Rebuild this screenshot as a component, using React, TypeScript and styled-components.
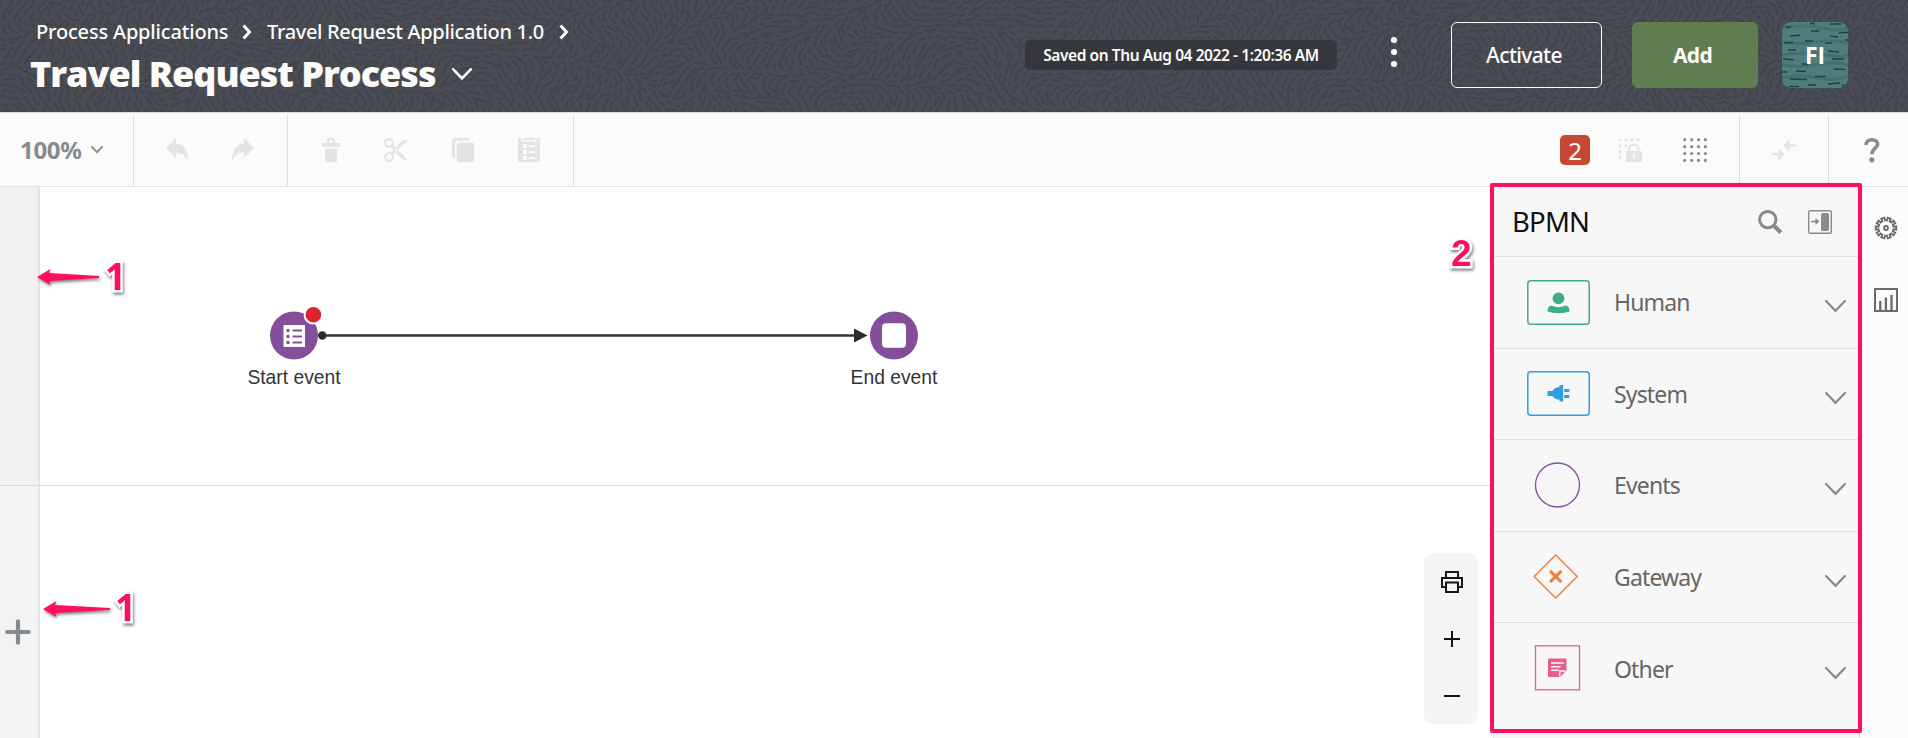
import React from 'react';
import styled, { createGlobalStyle } from 'styled-components';

const GlobalStyle = createGlobalStyle`
  * { box-sizing: border-box; }
  body { margin: 0; overflow: hidden; font-family: 'Noto Sans', 'Open Sans', sans-serif; }
  svg { display: block; flex: none; }
`;

const Page = styled.div`
  width: 1908px;
  height: 738px;
  display: flex;
  flex-direction: column;
  background: #fff;
  overflow: hidden;
`;

const Header = styled.header`
  position: relative;
  height: 112px;
  flex: none;
  display: flex;
  justify-content: space-between;
  background: #494c55;
  color: #fcfbfa;
`;

const Texture = styled.svg`
  position: absolute;
  inset: 0;
`;

const Titles = styled.div`
  position: relative;
  padding: 16px 0 0 30px;
`;

const Crumbs = styled.nav`
  display: flex;
  align-items: center;
  height: 32px;
  padding-left: 6px;
`;

const Crumb = styled.span<{ $w: number; $indent?: number; $ls: number }>`
  width: ${(p) => p.$w}px;
  padding-left: ${(p) => p.$indent ?? 0}px;
  font-size: 20px;
  line-height: 28px;
  font-weight: 500;
  letter-spacing: ${(p) => p.$ls}px;
  white-space: nowrap;
`;

const TitleRow = styled.div`
  display: flex;
  align-items: center;
  height: 52px;
`;

const Title = styled.h1`
  width: 422px;
  margin: 0;
  font-family: 'Open Sans', 'Noto Sans', sans-serif;
  font-size: 36px;
  line-height: 52px;
  font-weight: 800;
  letter-spacing: -1.02px;
  white-space: nowrap;
`;

const Actions = styled.div`
  position: relative;
  display: flex;
  align-items: center;
  height: 110px;
  padding-right: 60px;
`;

const SavedPill = styled.div`
  width: 312px;
  height: 30px;
  margin-right: 54px;
  border-radius: 5px;
  background: #36373c;
  font-size: 15.5px;
  font-weight: 600;
  line-height: 30px;
  letter-spacing: -0.42px;
  text-align: center;
  white-space: nowrap;
`;

const Button = styled.button<{ $primary?: boolean; $w: number }>`
  width: ${(p) => p.$w}px;
  height: 66px;
  padding: 0 5px 0 0;
  border: 1px solid ${(p) => (p.$primary ? '#5f7d4f' : '#fcfbfa')};
  border-radius: 6px;
  background: ${(p) => (p.$primary ? '#5f7d4f' : 'transparent')};
  color: #fcfbfa;
  font: ${(p) => (p.$primary ? 700 : 500)} 21px 'Noto Sans', sans-serif;
  letter-spacing: -0.65px;
  & + & { margin-left: 30px; }
`;

const Avatar = styled.div`
  position: relative;
  width: 66px;
  height: 66px;
  margin-left: 24px;
  border-radius: 9px;
  overflow: hidden;
  background: #4f7d7b;
`;

const Initials = styled.span`
  position: absolute;
  inset: 0;
  display: grid;
  place-items: center;
  font-family: 'Open Sans', sans-serif;
  font-size: 23px;
  font-weight: 700;
`;

const Toolbar = styled.div`
  flex: none;
  height: 75px;
  padding-top: 1px;
  display: flex;
  background: #fcfbfa;
  border-top: 1px solid #dfe1e0;
  border-bottom: 1px solid #e2e2e2;
`;

const Group = styled.div<{ $w: number; $pad?: number; $gap?: number; $line?: 'left' | 'right' }>`
  flex: none;
  width: ${(p) => p.$w}px;
  height: 72px;
  display: flex;
  align-items: center;
  padding-left: ${(p) => p.$pad ?? 0}px;
  gap: ${(p) => p.$gap ?? 0}px;
  ${(p) => p.$line && `border-${p.$line}: 1px solid #dfe1e0;`}
`;

const Spacer = styled.div`
  flex: 1;
`;

const Zoom = styled.span`
  width: 71px;
  margin: -2px 0 0 -1px;
  font-size: 24px;
  font-weight: 700;
  color: #868b8f;
  letter-spacing: -0.3px;
`;

const IssueBadge = styled.span`
  flex: none;
  width: 30px;
  height: 30px;
  border-radius: 5px;
  background: #c74634;
  color: #fff;
  font-size: 24px;
  line-height: 31px;
  text-align: center;
`;

const Workspace = styled.div`
  position: relative;
  flex: 1;
  display: flex;
  min-height: 0;
`;

const Lanes = styled.div`
  width: 1493px;
  display: flex;
  flex-direction: column;
`;

const Lane = styled.div<{ $h?: number }>`
  display: flex;
  ${(p) => (p.$h ? `height: ${p.$h}px; border-bottom: 1px solid #dcdcdc;` : 'flex: 1;')}
`;

const LaneHead = styled.div<{ $bg: string }>`
  width: 40px;
  border-right: 2px solid #e4e4e4;
  background: ${(p) => p.$bg};
  padding: 133px 0 0 5px;
`;

const NodeShape = styled.div<{ $x: number; $y: number }>`
  position: absolute;
  left: ${(p) => p.$x}px;
  top: ${(p) => p.$y}px;
  width: 120px;
  display: flex;
  flex-direction: column;
  align-items: center;
`;

const NodeLabel = styled.span`
  margin-top: 5px;
  font: 19.3px/26px 'Liberation Sans', Arial, sans-serif;
  color: #333;
  white-space: nowrap;
  letter-spacing: 0;
`;

const Overlay = styled.svg<{ $x: number; $y: number }>`
  position: absolute;
  left: ${(p) => p.$x}px;
  top: ${(p) => p.$y}px;
  overflow: visible;
`;

const ArrowOverlay = styled(Overlay)`
  filter: drop-shadow(1px 2.5px 1.5px rgba(0, 0, 0, 0.5));
`;

const ZoomTools = styled.div`
  position: absolute;
  left: 1424px;
  top: 366px;
  width: 54px;
  height: 171px;
  border-radius: 9px;
  background: #f6f5f4;
  display: flex;
  flex-direction: column;
  align-items: center;
  padding: 18px 0 0 2px;
  gap: 32px;
`;

const Palette = styled.aside`
  width: 367px;
  border-left: 1px solid #dfe1e0;
  border-right: 1px solid #dfe1e0;
  background: #f7f7f7;
`;

const PaletteHead = styled.div`
  height: 70px;
  display: flex;
  align-items: center;
  padding: 0 27px 0 18px;
  border-bottom: 1px solid #dfdfdf;
`;

const PaletteTitle = styled.h2`
  flex: 1;
  margin: 0;
  font-size: 27.5px;
  font-weight: 400;
  color: #111;
  letter-spacing: -0.8px;
`;

const IconGap = styled.span<{ $w: number }>`
  flex: none;
  width: ${(p) => p.$w}px;
`;

const PaletteRow = styled.div<{ $last?: boolean }>`
  height: 91.5px;
  display: flex;
  align-items: center;
  padding: 0 13px 0 33px;
  ${(p) => !p.$last && 'border-bottom: 1px solid #dfdfdf;'}
  & > svg:last-child { margin-top: 9px; }
`;

const RowLabel = styled.span`
  flex: 1;
  padding-left: 24px;
  font-size: 23px;
  color: #666;
  letter-spacing: -0.85px;
`;

const Rail = styled.div`
  flex: 1;
  background: #fcfbfa;
  display: flex;
  flex-direction: column;
  padding: 29px 0 0 14px;
  gap: 48px;
`;

const Highlight = styled.div`
  position: absolute;
  left: 1490px;
  top: -4px;
  width: 372px;
  height: 550px;
  border: 4px solid #ff0f5b;
  border-radius: 2px;
`;

const Marker = styled.span<{ $x: number; $y: number; $face?: string }>`
  position: absolute;
  left: ${(p) => p.$x}px;
  top: ${(p) => p.$y}px;
  font: bold 37px/42px ${(p) => p.$face ?? "'Open Sans'"}, sans-serif;
  color: #ff0f5b;
  -webkit-text-stroke: 5px #fff;
  paint-order: stroke fill;
  filter: drop-shadow(1.5px 2.5px 1.5px rgba(0, 0, 0, 0.5));
`;

/* Short strokes following a slowly turning flow field. */
const strokes = (() => {
  let d = '';
  let seed = 7;
  const rnd = () => {
    seed = (seed * 16807) % 2147483647;
    return seed / 2147483647;
  };
  for (let row = 0; row < 20; row++) {
    for (let col = 0; col < 240; col++) {
      const x = col * 8 + (row % 2) * 4 + rnd() * 4;
      const y = row * 6 + rnd() * 4;
      const a =
        Math.sin(x / 41 + 2 * Math.sin(y / 27)) * 1.3 +
        Math.cos(y / 19 + x / 73) * 1.2 +
        Math.sin(x / 97 - y / 31) * 0.8 +
        rnd() * 0.6;
      const l = 1.8 + rnd() * 1.6;
      const dx = Math.cos(a) * l;
      const dy = Math.sin(a) * l;
      d += `M${(x - dx).toFixed(1)} ${(y - dy).toFixed(1)}L${(x + dx).toFixed(1)} ${(y + dy).toFixed(1)}`;
    }
  }
  return d;
})();

const Chevron = ({ w, h, color, sw }: { w: number; h: number; color: string; sw: number }) => (
  <svg width={w} height={h} viewBox={`0 0 ${w} ${h}`} fill="none" stroke={color} strokeWidth={sw} strokeLinecap="round">
    <path d={`M${sw / 2} ${sw / 2}L${w / 2} ${h - sw}L${w - sw / 2} ${sw / 2}`} />
  </svg>
);

const CrumbArrow = () => (
  <svg width="10" height="16" viewBox="0 0 10 16" fill="none" stroke="#fcfbfa" strokeWidth="3">
    <path d="M1.5 1.5L7.5 8L1.5 14.5" />
  </svg>
);

const Undo = ({ flip }: { flip?: boolean }) => (
  <svg width="24" height="24" viewBox="0 0 24 24" fill="#e4e4e4">
    <path transform={flip ? 'translate(24 0) scale(-1 1)' : undefined} d="M1 10L11 0V6C19 6 23 12 23 23C20 17 17 14.5 11 14.5V20Z" />
  </svg>
);

const Trash = () => (
  <svg width="18" height="24" viewBox="0 0 18 24" fill="#e4e4e4">
    <path fillRule="evenodd" d="M5 5V2Q5 0 7 0H11Q13 0 13 2V5H17Q18 5 18 6V9H0V6Q0 5 1 5ZM7.3 2.3V5H10.7V2.3ZM3 10.5H15V23Q15 24 14 24H4Q3 24 3 23Z" />
  </svg>
);

const Scissors = () => (
  <svg width="24" height="24" viewBox="0 0 24 24" fill="none" stroke="#e4e4e4">
    <circle cx="5" cy="5" r="3.9" strokeWidth="2.2" />
    <circle cx="5" cy="19" r="3.9" strokeWidth="2.2" />
    <path d="M7.7 16.5L18.5 4.5" strokeWidth="3.2" />
    <path d="M7.7 7.5L18.5 19.8" strokeWidth="3.2" />
    <path d="M15 6L20 2H24L14.5 11.5ZM15 18L20 22H24L14.5 12.5Z" fill="#e4e4e4" stroke="none" />
    <circle cx="12.5" cy="12.3" r="1.2" fill="#fcfbfa" stroke="none" />
  </svg>
);

const Copy = () => (
  <svg width="22" height="24" viewBox="0 0 22 24" fill="#e4e4e4">
    <path d="M0 2Q0 0 2 0H17V2.7H5Q3 2.7 3 4.7V19.5H1.5Q0 19.5 0 18Z" />
    <rect x="4.8" y="4.5" width="17.2" height="19.5" rx="2" />
  </svg>
);

const FormIcon = () => (
  <svg width="22" height="24" viewBox="0 0 22 24">
    <path d="M0 0H3.5V3.5H18.5V0H22V24H0Z" fill="#e4e4e4" />
    <path d="M5 0H17V2H5Z" fill="#e4e4e4" />
    <path d="M5 6H9V10H5ZM11 7.3H17.3V9H11ZM5 12H9V16H5ZM11 13.3H17.3V15H11ZM5 18H9V22H5ZM11 19.3H17.3V21H11Z" fill="#fcfbfa" />
  </svg>
);

const dots = [1.7, 8.7, 15.5, 22.4];

const GridIcon = () => (
  <svg width="24" height="24" viewBox="0 0 24 24" fill="#868b8f">
    {dots.map((y) => dots.map((x) => <circle key={`${x}-${y}`} cx={x} cy={y} r="1.6" />))}
  </svg>
);

const GridLock = () => (
  <svg width="24" height="24" viewBox="0 0 24 24" fill="#e4e4e4">
    {[2, 8, 14, 20].map((x) => <circle key={x} cx={x} cy="1.7" r="1.5" />)}
    {[2, 8].map((x) => <circle key={x} cx={x} cy="7.7" r="1.5" />)}
    <circle cx="2" cy="13.7" r="1.5" />
    <circle cx="2" cy="19.7" r="1.5" />
    <path d="M11 14V11.5A4.8 4.8 0 0 1 20.6 11.5V14" fill="none" stroke="#e4e4e4" strokeWidth="2.2" />
    <rect x="8" y="13" width="16" height="11" rx="1.5" />
    <path d="M14.6 16.2H17V21H15.3V18H14.6Z" fill="#fcfbfa" />
  </svg>
);

const Merge = () => (
  <svg width="24" height="24" viewBox="0 0 24 24" fill="#e4e4e4">
    <path d="M24 6.2H17.5V1L11.3 7.5L17.5 14V8.8H24ZM0 15H6.5V9.8L12.7 16.3L6.5 22.8V17.6H0Z" />
  </svg>
);

const Help = () => (
  <svg width="16" height="25" viewBox="0 0 16 25">
    <path d="M2 7C2 3.6 4.5 1.8 8 1.8C11.6 1.8 13.6 3.8 13.6 6.4C13.6 10.2 8 10.4 8 16.2" fill="none" stroke="#868b8f" strokeWidth="3.6" />
    <circle cx="7.8" cy="21.8" r="2.6" fill="#868b8f" />
  </svg>
);

const Search = () => (
  <svg width="24" height="24" viewBox="0 0 24 24" fill="none" stroke="#868b8f">
    <circle cx="9.8" cy="9.6" r="8.2" strokeWidth="3" />
    <path d="M16 15.8L22.8 22.4" strokeWidth="4.2" />
  </svg>
);

const Collapse = () => (
  <svg width="24" height="24" viewBox="0 0 24 24" fill="none" stroke="#868b8f">
    <rect x="0.7" y="0.7" width="22.6" height="22.6" rx="1.5" strokeWidth="1.4" />
    <rect x="13" y="3" width="8" height="18" rx="2" fill="#868b8f" stroke="none" />
    <path d="M3 11.5H9.5" strokeWidth="1.6" />
    <path d="M7.5 8L11.3 11.5L7.5 15Z" fill="#868b8f" stroke="none" />
  </svg>
);

const gearOutline = Array.from({ length: 10 }, (_, i) => {
  const at = (r: number, deg: number) => {
    const t = ((i * 36 + deg) * Math.PI) / 180;
    return `${(12 + r * Math.cos(t)).toFixed(2)} ${(12 + r * Math.sin(t)).toFixed(2)}`;
  };
  return `${i ? 'L' : 'M'}${at(7.6, -10)}L${at(10.4, -9)}L${at(10.4, 9)}L${at(7.6, 10)}`;
}).join('');

const Gear = () => (
  <svg width="24" height="24" viewBox="0 0 24 24" fill="none" stroke="#6b6a68" strokeWidth="1.8">
    <path d={`${gearOutline}Z`} />
    <circle cx="12" cy="12" r="2" />
  </svg>
);

const BarChart = () => (
  <svg width="24" height="24" viewBox="0 0 24 24" fill="none" stroke="#6b6a68" strokeWidth="2">
    <rect x="1" y="1" width="22" height="22" />
    <path d="M6.3 22V13M11.9 22V9.5M17.5 22V7" strokeWidth="2.3" />
  </svg>
);

const Printer = () => (
  <svg width="22" height="22" viewBox="0 0 22 22" fill="none" stroke="#161513" strokeWidth="2">
    <path d="M5 7V1H17V7M5 16H1V7H21V16H17M5 11.5H17V21H5Z" />
  </svg>
);

const AvatarArt = () => (
  <svg width="66" height="66" viewBox="0 0 66 66" fill="none">
    <path d="M0 6Q20 2 40 6T66 5M0 20Q15 23 33 20T66 21M0 33Q24 29 45 33T66 31M0 43Q20 46 38 42T66 44M0 56Q20 52 36 56T66 54" stroke="#44706e" strokeWidth="3" />
    <path d="M4 5H9M28 1.5H33M48 2H59M8 14L18 13.3M29 9H37M57 10.5H66M2 21L11 20.5M23 19H31M48 14L56 15M43 21H50M63 18H66M6 28H14M46 29L57 30M1 37L12 37.7M20 42H26M50 37H62M0 50H5M14 49L24 49.5M52 47L63 47.5M33 54.5H44M8 57L25 57.5M46 62L58 61M26 63H34M7 64.5H17M60 63.5H65" stroke="#243f40" strokeWidth="1.4" />
  </svg>
);

const HumanIcon = () => (
  <svg width="63" height="45" viewBox="0 0 63 45">
    <rect x="0.8" y="0.8" width="61.4" height="43.4" rx="3" fill="none" stroke="#3fae85" strokeWidth="1.5" />
    <circle cx="31.5" cy="18.3" r="5.9" fill="#3fae85" />
    <path d="M24.5 25.5Q31.5 29 38.5 25.5Q42.5 26 42.5 31.5Q38 33.3 31.5 33.3Q25 33.3 20.5 31.5Q20.5 26 24.5 25.5Z" fill="#3fae85" />
  </svg>
);

const SystemIcon = () => (
  <svg width="63" height="45" viewBox="0 0 63 45">
    <rect x="0.8" y="0.8" width="61.4" height="43.4" rx="3" fill="none" stroke="#2f9fdf" strokeWidth="1.5" />
    <path d="M20.5 20H25.5Q27 16.5 32.5 16V14H36.2V30.5H32.5V28.7Q27 28 25.5 25H20.5ZM37.2 18H42.3V21H37.2ZM37.2 24H42.3V27H37.2Z" fill="#2f9fdf" />
  </svg>
);

const EventsIcon = () => (
  <svg width="63" height="46" viewBox="0 0 63 46">
    <circle cx="30.5" cy="23" r="22" fill="none" stroke="#854e9b" strokeWidth="1.3" />
  </svg>
);

const GatewayIcon = () => (
  <svg width="63" height="45" viewBox="0 0 63 45" fill="none" stroke="#ed813e">
    <path d="M28.7 1L50.2 22.5L28.7 44L7.2 22.5Z" strokeWidth="1.4" />
    <path d="M24 17.8L33.4 27.2M33.4 17.8L24 27.2" strokeWidth="3.2" strokeLinecap="round" />
  </svg>
);

const OtherIcon = () => (
  <svg width="63" height="47" viewBox="0 0 63 47">
    <rect x="8.5" y="0.8" width="44" height="44" fill="none" stroke="#e85d8a" strokeWidth="1.3" />
    <path d="M21 14.5Q21 13.5 22 13.5H38.5Q39.5 13.5 39.5 14.5V25.5L33 32H22Q21 32 21 31Z" fill="#e85d8a" />
    <path d="M24 18H37M24 21.7H33.5M24 25.3H31.5M32.8 31.5V26H38.5" stroke="#f7f7f7" strokeWidth="1.4" fill="none" />
  </svg>
);

const palette = [
  { label: 'Human', icon: <HumanIcon /> },
  { label: 'System', icon: <SystemIcon /> },
  { label: 'Events', icon: <EventsIcon /> },
  { label: 'Gateway', icon: <GatewayIcon /> },
  { label: 'Other', icon: <OtherIcon /> },
];

const Arrow = ({ x, y, len }: { x: number; y: number; len: number }) => (
  <ArrowOverlay $x={x} $y={y} width={len} height={16}>
    <path d={`M0 8L13.5 0L12 4L${len} 7V9L12 12L13.5 16Z`} fill="#ff0f5b" />
  </ArrowOverlay>
);

export default function App() {
  return (
    <Page>
      <GlobalStyle />
      <Header>
        <Texture width="1908" height="112">
          <path d={strokes} stroke="#414448" strokeWidth="2.2" strokeLinecap="round" />
        </Texture>
        <Titles>
          <Crumbs>
            <Crumb $w={206} $ls={-0.18}>Process Applications</Crumb>
            <CrumbArrow />
            <Crumb $w={307} $indent={15} $ls={-0.33}>Travel Request Application 1.0</Crumb>
            <CrumbArrow />
          </Crumbs>
          <TitleRow>
            <Title>Travel Request Process</Title>
            <Chevron w={20} h={13} color="#fcfbfa" sw={2.6} />
          </TitleRow>
        </Titles>
        <Actions>
          <SavedPill>Saved on Thu Aug 04 2022 - 1:20:36 AM</SavedPill>
          <svg width="60" height="36" viewBox="0 0 60 36" fill="#fcfbfa">
            <circle cx="3" cy="3" r="3.1" />
            <circle cx="3" cy="15" r="3.1" />
            <circle cx="3" cy="27" r="3.1" />
          </svg>
          <Button $w={151}>Activate</Button>
          <Button $w={126} $primary>Add</Button>
          <Avatar>
            <AvatarArt />
            <Initials>FI</Initials>
          </Avatar>
        </Actions>
      </Header>
      <Toolbar>
        <Group $w={134} $pad={21} $line="right">
          <Zoom>100%</Zoom>
          <Chevron w={12} h={8} color="#868b8f" sw={1.8} />
        </Group>
        <Group $w={154} $pad={31} $gap={42} $line="right">
          <Undo />
          <Undo flip />
        </Group>
        <Group $w={286} $pad={34} $gap={44} $line="right">
          <Trash />
          <Scissors />
          <Copy />
          <FormIcon />
        </Group>
        <Spacer />
        <Group $w={179}>
          <IssueBadge>2</IssueBadge>
          <IconGap $w={28} />
          <GridLock />
          <IconGap $w={41} />
          <GridIcon />
        </Group>
        <Group $w={89} $pad={32} $line="left">
          <Merge />
        </Group>
        <Group $w={80} $pad={35} $line="left">
          <Help />
        </Group>
      </Toolbar>
      <Workspace>
        <Lanes>
          <Lane $h={299}>
            <LaneHead $bg="#f2f1ef" />
          </Lane>
          <Lane>
            <LaneHead $bg="#f3f3f3">
              <svg width="26" height="26" viewBox="0 0 26 26" stroke="#868b8f" strokeWidth="4.2" strokeLinecap="round">
                <path d="M2.3 13H23.7M13 2.3V23.7" />
              </svg>
            </LaneHead>
          </Lane>
        </Lanes>
        <Palette>
          <PaletteHead>
            <PaletteTitle>BPMN</PaletteTitle>
            <Search />
            <IconGap $w={26} />
            <Collapse />
          </PaletteHead>
          {palette.map((p, i) => (
            <PaletteRow key={p.label} $last={i === palette.length - 1}>
              {p.icon}
              <RowLabel>{p.label}</RowLabel>
              <Chevron w={21} h={13} color="#868b8f" sw={2.2} />
            </PaletteRow>
          ))}
        </Palette>
        <Rail>
          <Gear />
          <BarChart />
        </Rail>

        <Overlay $x={318} $y={140} width={550} height={16}>
          <path d="M4 8.5H540" stroke="#333" strokeWidth="2.3" />
          <circle cx="4.3" cy="8.5" r="4.2" fill="#2b2b2b" />
          <path d="M536 1.5L549.5 8.5L536 15.5Z" fill="#2b2b2b" />
        </Overlay>
        <NodeShape $x={234} $y={124}>
          <svg width="48" height="49" viewBox="0 0 48 49" overflow="visible">
            <circle cx="24" cy="24.5" r="24" fill="#854e9b" />
            <rect x="13.5" y="14" width="21.5" height="22" fill="#fff" />
            <path d="M16.5 18H19.5V21H16.5ZM16.5 24H19.5V27H16.5ZM16.5 30H19.5V33H16.5ZM22.5 18.5H32V20.5H22.5ZM22.5 24.5H32V26.5H22.5ZM22.5 30.5H32V32.5H22.5Z" fill="#854e9b" />
            <circle cx="43.4" cy="3.7" r="8.8" fill="#df2030" stroke="#fff" strokeWidth="2" />
          </svg>
          <NodeLabel>Start event</NodeLabel>
        </NodeShape>
        <NodeShape $x={834} $y={124}>
          <svg width="48" height="49" viewBox="0 0 48 49">
            <circle cx="24" cy="24.5" r="24" fill="#854e9b" />
            <rect x="12" y="12.3" width="24" height="24.5" rx="4" fill="#fff" />
          </svg>
          <NodeLabel>End event</NodeLabel>
        </NodeShape>

        <ZoomTools>
          <Printer />
          <svg width="22" height="26" viewBox="0 0 22 26" stroke="#161513" strokeWidth="2">
            <path d="M3 14H19M11 6V22" />
          </svg>
          <svg width="22" height="26" viewBox="0 0 22 26" stroke="#161513" strokeWidth="2">
            <path d="M3 13H19" />
          </svg>
        </ZoomTools>

        <Highlight />
        <Arrow x={37} y={82} len={62} />
        <Arrow x={43} y={414} len={67} />
        <Marker $x={105} $y={68}>1</Marker>
        <Marker $x={115} $y={399}>1</Marker>
        <Marker $x={1451} $y={46} $face="'Liberation Sans'">2</Marker>
      </Workspace>
    </Page>
  );
}
